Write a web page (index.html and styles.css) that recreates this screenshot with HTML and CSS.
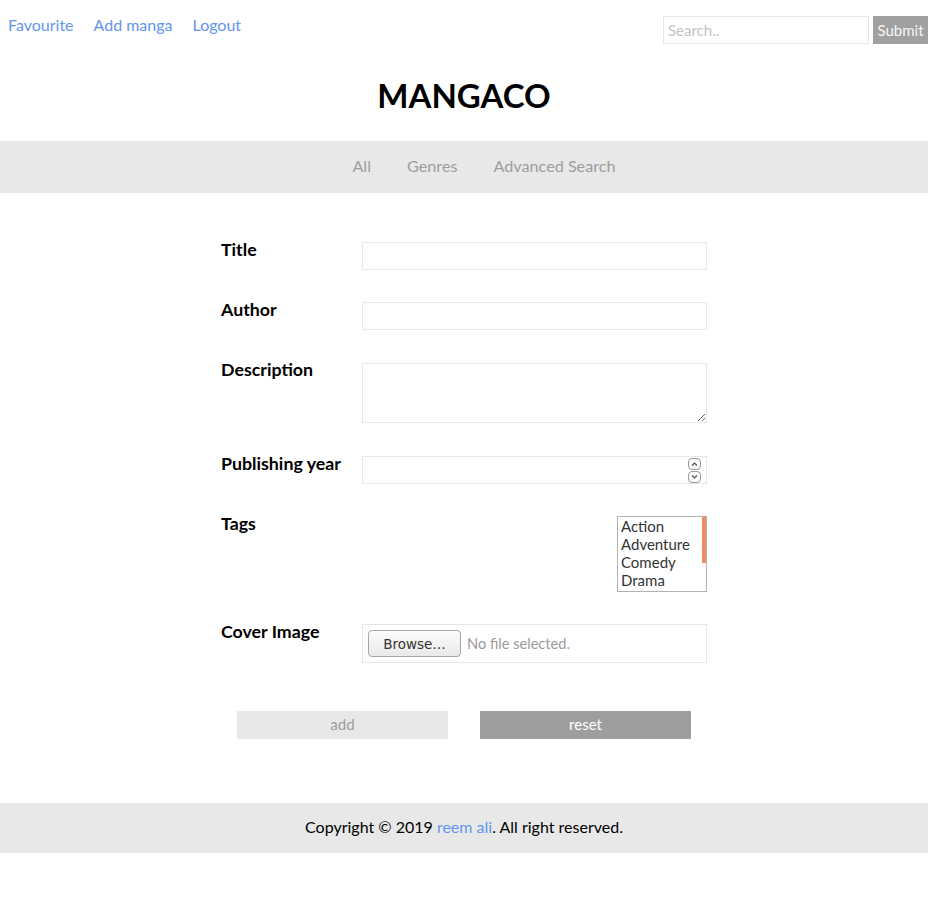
FILE: index.html
```html
<!DOCTYPE html>
<html lang="en">
<head>
<meta charset="utf-8">
<title>MANGACO</title>
<link rel="stylesheet" href="styles.css">
</head>
<body>
<header class="topbar">
  <nav class="user-links">
    <a href="#">Favourite</a>
    <a href="#">Add manga</a>
    <a href="#">Logout</a>
  </nav>
  <form class="search">
    <input class="search-input" type="text" placeholder="Search..">
    <button class="search-btn" type="button">Submit</button>
  </form>
</header>

<h1 class="brand">MANGACO</h1>

<nav class="mainnav">
  <a href="#">All</a>
  <a href="#">Genres</a>
  <a href="#">Advanced Search</a>
</nav>

<main class="content">
  <form class="manga-form">
    <div class="row">
      <label class="lbl">Title</label>
      <input class="field" type="text">
    </div>
    <div class="row">
      <label class="lbl">Author</label>
      <input class="field" type="text">
    </div>
    <div class="row">
      <label class="lbl">Description</label>
      <textarea class="area"></textarea>
    </div>
    <div class="row">
      <label class="lbl">Publishing year</label>
      <div class="numbox">
        <input class="num-input" type="text">
        <svg class="spin" width="13" height="25" viewBox="0 0 13 25">
          <rect x="0.5" y="0.5" width="12" height="11" rx="3.5" fill="#fafafa" stroke="#9a9a9a"/>
          <rect x="0.5" y="13.5" width="12" height="11" rx="3.5" fill="#fafafa" stroke="#9a9a9a"/>
          <path d="M4 7.5 L6.5 5 L9 7.5" fill="none" stroke="#555" stroke-width="1.2"/>
          <path d="M4 17.5 L6.5 20 L9 17.5" fill="none" stroke="#555" stroke-width="1.2"/>
        </svg>
      </div>
    </div>
    <div class="row">
      <label class="lbl">Tags</label>
      <div class="tags">
        <ul class="tag-list">
          <li>Action</li>
          <li>Adventure</li>
          <li>Comedy</li>
          <li>Drama</li>
        </ul>
        <div class="tag-scroll"><div class="tag-thumb"></div></div>
      </div>
    </div>
    <div class="row">
      <label class="lbl">Cover Image</label>
      <div class="filebox">
        <span class="browse">Browse…</span>
        <span class="nofile">No file selected.</span>
      </div>
    </div>
    <div class="actions">
      <button class="btn btn-add" type="button">add</button>
      <button class="btn btn-reset" type="button">reset</button>
    </div>
  </form>
</main>

<footer class="footer">
  Copyright © 2019 <a href="#">reem ali</a>. All right reserved.
</footer>
</body>
</html>
```

FILE: styles.css
```css
* { box-sizing: border-box; }

body {
  margin: 0;
  font-family: Lato, "Open Sans", sans-serif;
  font-size: 16px;
  color: #000;
  background: #fff;
}

a { color: #6495ed; text-decoration: none; }

.topbar {
  display: flex;
  justify-content: space-between;
  align-items: flex-start;
  padding: 15px 0 0 8px;
}

.user-links {
  display: flex;
  gap: 20px;
  line-height: 1.2;
}

.search {
  display: flex;
  gap: 4px;
  margin: 1px 0 0;
}

.search-input {
  width: 206px;
  height: 28px;
  border: 1px solid #e6e6e6;
  padding: 0 4px;
  font-family: Lato, sans-serif;
  font-size: 15px;
  color: #333;
  outline: none;
}
.search-input::placeholder { color: #c4c4c4; }

.search-btn {
  width: 55px;
  height: 28px;
  border: none;
  background: #a0a0a0;
  color: #f5f5f5;
  font-family: Lato, sans-serif;
  font-size: 15px;
  padding: 0 0 1px;
}

.brand {
  margin: 31px 0 26px;
  text-align: center;
  font-size: 33px;
  line-height: 40px;
  font-weight: 700;
}

.mainnav {
  height: 52px;
  background: #e8e8e8;
  display: flex;
  justify-content: center;
  align-items: center;
  gap: 36px;
  padding: 0 0 3px 40px;
  font-size: 16.2px;
}
.mainnav a { color: #9d9d9d; }

.content {
  padding-top: 46px;
}

.manga-form {
  width: 486px;
  margin: 0 auto;
}

.row {
  display: grid;
  grid-template-columns: 141px 345px;
  align-items: start;
  margin-bottom: 29px;
}

.lbl {
  font-weight: 700;
  font-size: 17.8px;
  line-height: 20px;
}

.field {
  margin-top: 3px;
  height: 28px;
  width: 345px;
  border: 1px solid #e6e6e6;
  font-family: Lato, sans-serif;
  font-size: 15px;
  padding: 0 4px;
  outline: none;
}

.area {
  margin: 4px 0 1px;
  width: 345px;
  height: 60px;
  border: 1px solid #e6e6e6;
  font-family: Lato, sans-serif;
  font-size: 15px;
  outline: none;
  resize: both;
}

.numbox {
  margin-top: 3px;
  height: 28px;
  border: 1px solid #e6e6e6;
  display: flex;
  align-items: center;
  padding-right: 5px;
}
.num-input {
  flex: 1;
  border: none;
  height: 26px;
  outline: none;
  font-family: Lato, sans-serif;
  font-size: 15px;
  min-width: 0;
}
.spin { display: block; }

.tags {
  margin-top: 3px;
  justify-self: end;
  width: 90px;
  height: 76px;
  border: 1px solid #b2b2b2;
  display: flex;
}
.tag-list {
  list-style: none;
  margin: 0;
  padding: 0 0 0 3px;
  flex: 1;
  font-size: 15px;
  line-height: 18px;
  color: #333;
  overflow: hidden;
}
.tag-scroll {
  width: 4px;
}
.tag-thumb {
  height: 46px;
  background: #f08b69;
}

.filebox {
  margin-top: 3px;
  height: 39px;
  border: 1px solid #e6e6e6;
  display: flex;
  align-items: center;
  padding-left: 5px;
  gap: 6px;
}
.browse {
  width: 93px;
  height: 27px;
  border: 1px solid #a6a6a6;
  border-radius: 4px;
  background: linear-gradient(#fbfbfb, #e9e9e9);
  color: #333;
  font-family: "DejaVu Sans", sans-serif;
  font-size: 13.5px;
  display: flex;
  align-items: center;
  justify-content: center;
}
.nofile {
  color: #9a9a9a;
  font-size: 14.6px;
}

.actions {
  display: flex;
  justify-content: center;
  gap: 32px;
  margin-top: 48px;
}

.btn {
  width: 211px;
  height: 28px;
  border: none;
  font-family: Lato, sans-serif;
  font-size: 15px;
  padding: 0 0 3px;
}
.btn-add { background: #e8e8e8; color: #9d9d9d; }
.btn-reset { background: #9e9e9e; color: #fff; }

.footer {
  margin-top: 64px;
  height: 50px;
  line-height: 48px;
  background: #e8e8e8;
  text-align: center;
}
```
